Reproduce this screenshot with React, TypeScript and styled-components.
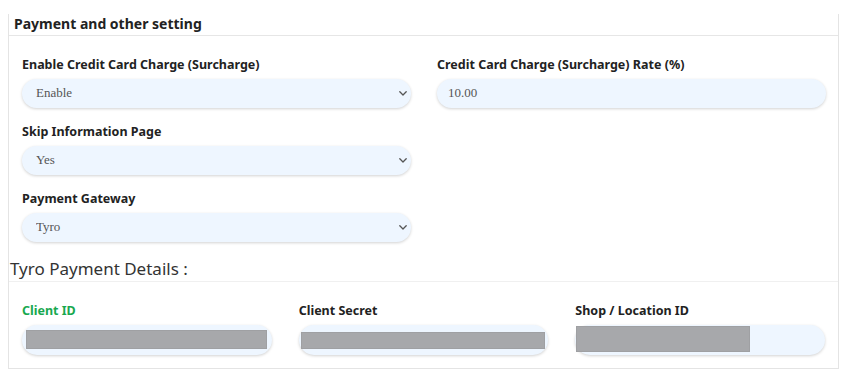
import React from "react"
import styled, { createGlobalStyle } from "styled-components"

const GlobalStyle = createGlobalStyle`
    body {
        margin: 0;
        background: #ffffff;
        font-family: "Noto Sans", "Open Sans", sans-serif;
        color: #222222;
    }
`

const Chevron = () => (
    <SChevron width="8" height="5" viewBox="0 0 8 5">
        <path d="M0.8 0.8 L4 4 L7.2 0.8" fill="none" stroke="#555" strokeWidth="1.3" strokeLinecap="round" strokeLinejoin="round" />
    </SChevron>
)

const Select = ({ value }: { value: string }) => (
    <SSelectWrap>
        <SSelect defaultValue={value}>
            <option>{value}</option>
        </SSelect>
        <Chevron />
    </SSelectWrap>
)

const secrets = [
    { label: "Client ID", green: true, x: 4, w: 241, top: 5, h: 19 },
    { label: "Client Secret", green: false, x: 2, w: 244, top: 7, h: 17 },
    { label: "Shop / Location ID", green: false, x: 1, w: 174, top: 1, h: 26 },
]

export default function App() {
    return (
        <SPage>
            <GlobalStyle />
            <SCard>
                <STitle>Payment and other setting</STitle>
                <SGrid>
                    <SField>
                        <SLabel>Enable Credit Card Charge (Surcharge)</SLabel>
                        <Select value="Enable" />
                    </SField>
                    <SField>
                        <SLabel>Credit Card Charge (Surcharge) Rate (%)</SLabel>
                        <SInput defaultValue="10.00" />
                    </SField>
                    <SField>
                        <SLabel>Skip Information Page</SLabel>
                        <Select value="Yes" />
                    </SField>
                    <div />
                    <SField>
                        <SLabel>Payment Gateway</SLabel>
                        <Select value="Tyro" />
                    </SField>
                </SGrid>
                <SSubTitle>Tyro Payment Details :</SSubTitle>
                <SThreeCols>
                    {secrets.map((s) => (
                        <SField key={s.label}>
                            <SLabel green={s.green}>{s.label}</SLabel>
                            <SSecretBox>
                                <SRedacted style={{ marginLeft: s.x, marginTop: s.top, width: s.w, height: s.h }} />
                            </SSecretBox>
                        </SField>
                    ))}
                </SThreeCols>
            </SCard>
        </SPage>
    )
}

const SPage = styled.div`
    padding: 23px 4px 6px 8px;
`
const SCard = styled.div`
    border: 1px solid #e4e4e4;
    border-top: none;
    width: 829px;
`
const STitle = styled.div`
    margin-top: -9px;
    padding: 0 0 1px 5px;
    font-size: 14px;
    line-height: 20px;
    font-weight: 700;
    color: #222;
    border-bottom: 1px solid #e6e6e6;
    background: #ffffff;
`
const SGrid = styled.div`
    display: grid;
    grid-template-columns: 1fr 1fr;
    column-gap: 26px;
    row-gap: 15px;
    padding: 20px 12px 0 13px;
`
const SField = styled.div`
    display: flex;
    flex-direction: column;
    gap: 5px;
`
const SLabel = styled.div<{ green?: boolean }>`
    font-size: 12.5px;
    line-height: 18px;
    font-weight: 700;
    color: ${({ green }) => (green ? "#18a84f" : "#222")};
`
const SSelectWrap = styled.div`
    position: relative;
`
const SSelect = styled.select`
    appearance: none;
    display: block;
    width: 100%;
    height: 29px;
    border: none;
    border-radius: 15px;
    background: #eef6ff;
    box-shadow: 0 1px 3px rgba(0, 0, 0, 0.18);
    padding: 0 14px 2px;
    font-family: "Liberation Serif", serif;
    font-size: 13px;
    color: #555;
    outline: none;
`
const SChevron = styled.svg`
    position: absolute;
    right: 4px;
    top: 12px;
    pointer-events: none;
`
const SInput = styled.input`
    display: block;
    height: 29px;
    box-sizing: border-box;
    border: none;
    border-radius: 15px;
    background: #eef6ff;
    box-shadow: 0 1px 3px rgba(0, 0, 0, 0.18);
    padding: 0 11px 2px;
    font-family: "Liberation Serif", serif;
    font-size: 13px;
    color: #555;
    outline: none;
`
const SSubTitle = styled.div`
    margin-top: 15px;
    padding-left: 1px;
    font-size: 17px;
    line-height: 24px;
    font-weight: 400;
    color: #333;
    border-bottom: 1px solid #f0f0f0;
`
const SThreeCols = styled.div`
    display: grid;
    grid-template-columns: repeat(3, 1fr);
    column-gap: 27px;
    padding: 20px 13px 13px 13px;
`
const SSecretBox = styled.div`
    display: flex;
    height: 30px;
    border-radius: 15px;
    background: #eef6ff;
    box-shadow: 0 1px 3px rgba(0, 0, 0, 0.18);
`
const SRedacted = styled.div`
    background: #a7a8ab;
    border: 1px solid #9fa0a3;
    box-sizing: border-box;
`
